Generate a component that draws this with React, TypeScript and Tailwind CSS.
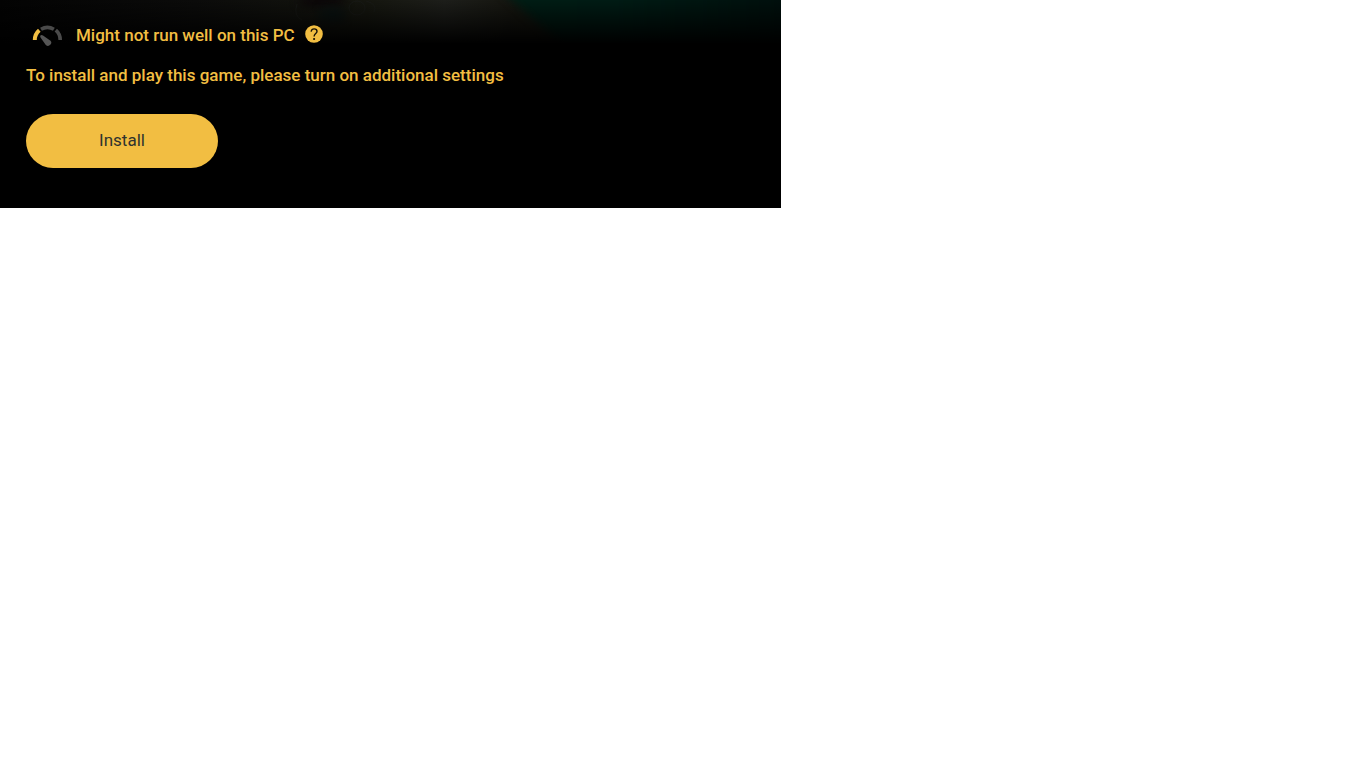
const GaugeIcon = () => (
  <svg className="h-6 w-8" viewBox="0 0 32 24" fill="none" aria-hidden="true">
    <path d="M2.8 17A12.8 12.8 0 0 1 7.3 7.2" stroke="#f2be42" strokeWidth="4" />
    <path d="M9 6.2A12.8 12.8 0 0 1 21.9 6.2" stroke="#4a4a4a" strokeWidth="3.6" />
    <path d="M23.8 7.2A12.8 12.8 0 0 1 28.2 17" stroke="#4a4a4a" strokeWidth="3.6" />
    <path d="M8.4 12.5Q9.6 11.6 11 12.5L18.2 17.4A3.1 3.1 0 0 1 13.8 21.9L8.7 14.8Q7.9 13.4 8.4 12.5Z" fill="#555555" />
  </svg>
);

const HelpIcon = () => (
  <svg className="h-[18px] w-[18px]" viewBox="0 0 18 18" fill="none" aria-hidden="true">
    <circle cx="9" cy="9" r="8.8" fill="#f2be42" />
    <path d="M6.1 6.7C6.4 4.9 7.5 3.9 9.1 3.9C10.8 3.9 12 4.9 12 6.4C12 8.5 9.1 8.7 9.1 11.4" stroke="#171206" strokeWidth="1.4" />
    <circle cx="9.1" cy="14" r="1.1" fill="#171206" />
  </svg>
);

const Backdrop = () => (
  <svg className="absolute inset-x-0 top-0 h-11 w-full" viewBox="0 0 781 44" preserveAspectRatio="none" aria-hidden="true">
    <defs>
      <linearGradient id="scene" x1="0" x2="1" y1="0" y2="0">
        <stop offset="0" stopColor="#030303" />
        <stop offset="0.25" stopColor="#0b0b0a" />
        <stop offset="0.47" stopColor="#15160f" />
        <stop offset="0.57" stopColor="#1d1e1a" />
        <stop offset="0.66" stopColor="#15150f" />
      </linearGradient>
      <linearGradient id="green" gradientUnits="userSpaceOnUse" x1="500" x2="781" y1="0" y2="0">
        <stop offset="0" stopColor="#001d14" />
        <stop offset="0.4" stopColor="#001b14" />
        <stop offset="1" stopColor="#000f0c" />
      </linearGradient>
      <linearGradient id="fade" x1="0" x2="0" y1="0" y2="1">
        <stop offset="0" stopColor="#000" stopOpacity="0" />
        <stop offset="1" stopColor="#000" />
      </linearGradient>
      <filter id="soft" x="-20%" y="-50%" width="140%" height="200%" colorInterpolationFilters="sRGB">
        <feGaussianBlur stdDeviation="4" />
      </filter>
    </defs>
    <rect width="781" height="44" fill="url(#scene)" />
    <path d="M498 -12L572 54H800V-12Z" fill="url(#green)" filter="url(#soft)" />
    <ellipse cx="322" cy="1" rx="24" ry="6" fill="#0b0608" filter="url(#soft)" />
    <ellipse cx="332" cy="15" rx="14" ry="8" fill="#0a1211" filter="url(#soft)" />
    {/* Faint outlines */}
    <g stroke="#1a1c1a" strokeOpacity="0.6">
      <path d="M297 4Q293 16 302 20" fill="none" />
      <ellipse cx="357" cy="8" rx="8" ry="7" fill="none" />
      <path d="M366 1Q378 4 374 12" fill="none" />
    </g>
    <rect width="781" height="44" fill="url(#fade)" />
  </svg>
);

export default function App() {
  return (
    <div className="min-h-screen bg-white font-['Roboto','Noto_Sans',sans-serif]">
      <section className="relative w-full max-w-[781px] bg-black px-[26px] pt-[23px] pb-10">
        <Backdrop />

        <div className="relative">
          {/* Compatibility */}
          <div className="flex h-6 items-center pl-1.5">
            <GaugeIcon />
            <span className="ml-3 text-[17px] font-medium leading-6 text-[#f2be42]">Might not run well on this PC</span>
            <button type="button" aria-label="More about compatibility" className="ml-2.5 -mt-0.5 cursor-pointer">
              <HelpIcon />
            </button>
          </div>

          <p className="mt-4 text-[17px] font-medium leading-6 text-[#f2be42]">To install and play this game, please turn on additional settings</p>

          <button type="button" className="mt-[27px] h-[54px] w-48 cursor-pointer rounded-full bg-[#f2be42] pb-0.5 text-[17px] leading-6 text-[#30332e]">
            Install
          </button>
        </div>
      </section>
    </div>
  );
}
